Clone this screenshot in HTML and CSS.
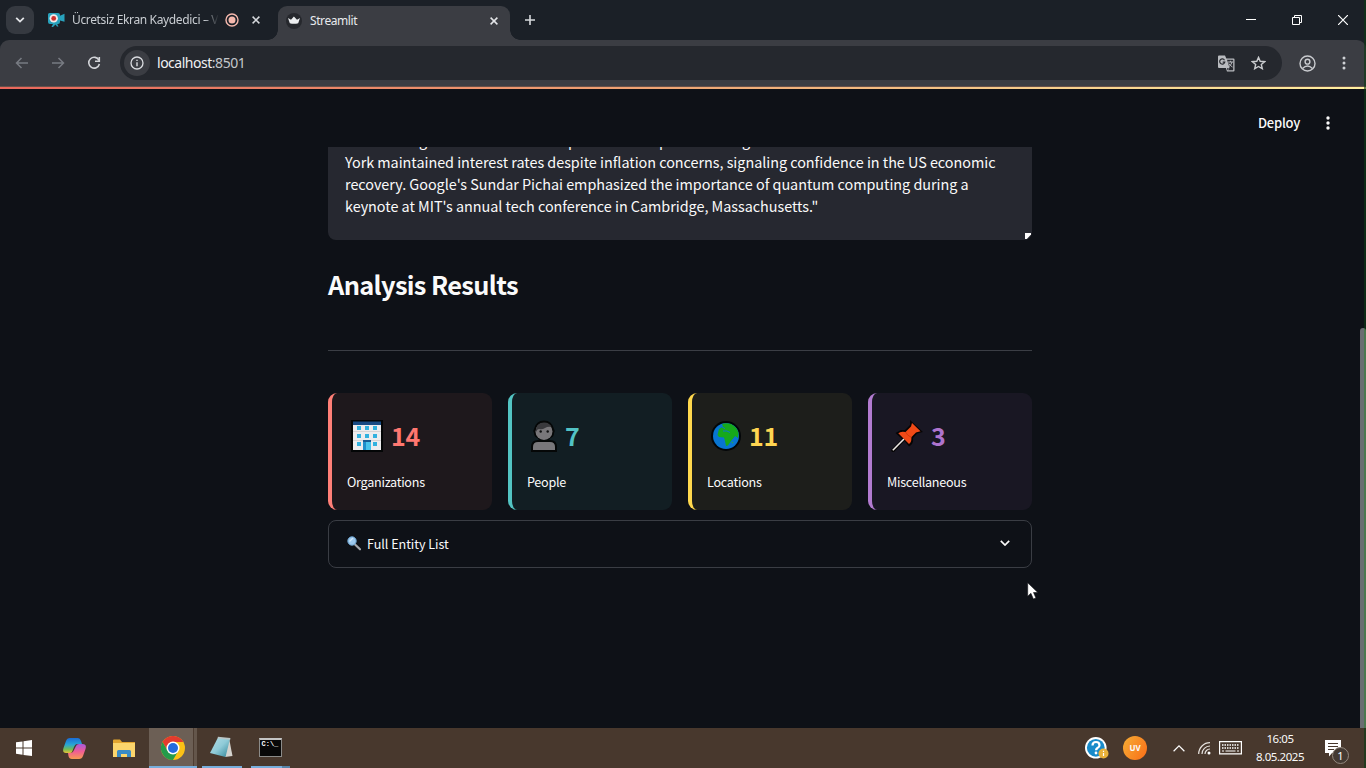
FILE: index.html
```html
<!DOCTYPE html>
<html lang="en">
<head>
<meta charset="utf-8">
<title>Streamlit</title>
<link rel="stylesheet" href="styles.css">
</head>
<body>
<div class="screen">
  <header class="tabstrip">
    <div class="tab-search"><svg width="10" height="6" viewBox="0 0 10 6"><path d="M1.2 .8 5 4.6 8.8 .8" fill="none" stroke="#e3e5e8" stroke-width="1.8"/></svg></div>
    <div class="tab tab-idle">
      <svg class="favicon" width="17" height="15" viewBox="0 0 17 15"><path d="M0 1.5Q0 0 1.5 0H10q2 0 2 2v.8L16.5.8v8L12 7.5V9q0 2-2 2H9.200l1.300 2.600H9L7.500 11.500l-2.500 2.500H3.500L5 11H2Q0 11 0 9Z" fill="#28a2bd"/><circle cx="5.700" cy="5.400" r="4.200" fill="#f4e9e9"/><circle cx="5.700" cy="5.400" r="2.400" fill="#ca302c"/></svg>
      <span class="tab-title title-fade">Ücretsiz Ekran Kaydedici – V</span>
      <svg class="rec" width="14" height="14" viewBox="0 0 14 14"><circle cx="7" cy="7" r="6" fill="none" stroke="#f4b8ad" stroke-width="1.400"/><circle cx="7" cy="7" r="3.500" fill="#f4b8ad"/></svg>
      <svg class="x-idle" width="8" height="8" viewBox="0 0 8 8"><path d="M.6.6 7.400 7.400M7.400.6.6 7.400" stroke="#d6d9dd" stroke-width="1.500"/></svg>
    </div>
    <div class="tab tab-active">
      <svg class="crown" width="16" height="16" viewBox="0 0 16 16"><circle cx="8" cy="8" r="8" fill="#26282d"/><path d="M2 5 5 6.700 7.900 3.500 11 6.700 14 5 12.200 10.200Q8 11.400 3.800 10.200Z" fill="#eceef0"/></svg>
      <span class="tab-title">Streamlit</span>
      <svg class="x-active" width="8" height="8" viewBox="0 0 8 8"><path d="M.6.6 7.400 7.400M7.400.6.6 7.400" stroke="#e3e5e8" stroke-width="1.500"/></svg>
    </div>
    <svg class="plus" width="10" height="10" viewBox="0 0 10 10"><path d="M5 0V10M0 5H10" stroke="#d6d9dd" stroke-width="1.600"/></svg>
    <div class="window-buttons">
      <svg width="10" height="10" viewBox="0 0 10 10"><path d="M0 4.500H10" stroke="#fff"/></svg>
      <svg width="10" height="10" viewBox="0 0 10 10"><path d="M.5 2.500H7.500V9.500H.5ZM2.500 2.500V.5H9.500V7.500H7.500" fill="none" stroke="#fff"/></svg>
      <svg width="10" height="10" viewBox="0 0 10 10"><path d="M0 0 10 10M10 0 0 10" stroke="#fff" stroke-width="1.200"/></svg>
    </div>
  </header>

  <nav class="toolbar">
    <svg class="back" width="14" height="12" viewBox="0 0 14 12"><path d="M13 6H1.800M6.500 1 1.500 6l5 5" fill="none" stroke="#777b82" stroke-width="1.500"/></svg>
    <svg class="forward" width="14" height="12" viewBox="0 0 14 12"><path d="M1 6H12.200M7.500 1l5 5-5 5" fill="none" stroke="#777b82" stroke-width="1.500"/></svg>
    <svg class="reload" width="14" height="14" viewBox="0 0 14 14"><path d="M12 4.300A5.400 5.400 0 1 0 12.400 8" fill="none" stroke="#d3d5d9" stroke-width="1.600"/><path d="M12.300 1V5.300H8" fill="none" stroke="#d3d5d9" stroke-width="1.600"/></svg>
    <div class="omnibox">
      <div class="site-info"><svg width="14" height="14" viewBox="0 0 14 14"><circle cx="7" cy="7" r="6" fill="none" stroke="#dadce0" stroke-width="1.300"/><path d="M7 6.200V10.200M7 3.700V5.100" stroke="#dadce0" stroke-width="1.400"/></svg></div>
      <span class="url">localhost<span class="port">:8501</span></span>
      <svg class="translate" width="17" height="17" viewBox="0 0 17 17"><path d="M1 .5H7l1.300 3H15.500Q16.500 3.500 16.500 4.500V15.500Q16.500 16.500 15.500 16.500H9L7.900 13H1Q0 13 0 12V1.500Q0 .5 1 .5Z" fill="#b9bbbf"/><path d="M9 4.800H15.200V15.200H10L11.500 12.800Z" fill="#292b31"/><path d="M9.800 7H15M12.400 5.800V7M14 7Q13.400 10 10.500 12M10.800 8.500Q12 10.500 14.500 12" fill="none" stroke="#b9bbbf"/><path d="M6.500 5.200A2.600 2.600 0 1 0 6.800 7.200H4.700" fill="none" stroke="#292b31" stroke-width="1.200"/><path d="M9 13.300 10.900 13.100 9.300 15.500Z" fill="#292b31"/></svg>
      <svg class="star" width="15" height="14" viewBox="0 0 15 14"><path d="M7.500 1.400 9.200 5.300 13.600 5.700 10.300 8.500 11.300 12.700 7.500 10.500 3.700 12.700 4.700 8.500 1.400 5.700 5.800 5.300Z" fill="none" stroke="#cacccf" stroke-width="1.400"/></svg>
    </div>
    <svg class="profile" width="17" height="17" viewBox="0 0 17 17"><circle cx="8.500" cy="8.500" r="7.500" fill="none" stroke="#c9cbcf" stroke-width="1.400"/><circle cx="8.500" cy="6.700" r="2.400" fill="none" stroke="#c9cbcf" stroke-width="1.400"/><path d="M3.500 13.500Q8.500 8.700 13.500 13.500" fill="none" stroke="#c9cbcf" stroke-width="1.400"/></svg>
    <svg class="menu-dots" width="4" height="14" viewBox="0 0 4 14"><circle cx="2" cy="2" r="1.500" fill="#cfd1d5"/><circle cx="2" cy="7" r="1.500" fill="#cfd1d5"/><circle cx="2" cy="12" r="1.500" fill="#cfd1d5"/></svg>
  </nav>
  <div class="decoration"></div>

  <main class="page">
    <div class="app-header">
      <span class="deploy">Deploy</span>
      <svg width="4" height="14" viewBox="0 0 4 14"><circle cx="2" cy="2" r="1.700" fill="#fafafa"/><circle cx="2" cy="7" r="1.700" fill="#fafafa"/><circle cx="2" cy="12" r="1.700" fill="#fafafa"/></svg>
    </div>
    <div class="content">
      <div class="textarea">
        <div class="line cut-line"><i>g</i><i>p</i><i>p</i><i>g</i></div>
        <div class="line">York maintained interest rates despite inflation concerns, signaling confidence in the US economic</div>
        <div class="line">recovery. Google's Sundar Pichai emphasized the importance of quantum computing during a</div>
        <div class="line">keynote at MIT's annual tech conference in Cambridge, Massachusetts."</div>
        <svg class="grip" width="6" height="6" viewBox="0 0 6 6"><path d="M0 0H6V1.500L1.800 6H0Z" fill="#fff"/></svg>
      </div>
      <h2 class="heading">Analysis Results</h2>
      <div class="rule"></div>
      <div class="cards">
        <section class="card orgs">
          <div class="metric">
            <svg width="32" height="32" viewBox="0 0 32 32"><path d="M0 0H32V32H0Z" fill="#030506"/><path d="M2 5H30V30H2Z" fill="#ececee"/><path d="M2 1.500H30V5H2Z" fill="#174a83"/><path d="M2 11H30V12H2ZM2 20H30V21H2Z" fill="#d6d3d5"/><path d="M6 6h4v4H6ZM14 6h4v4H14ZM22 6h4v4H22ZM6 14h4v4H6ZM14 14h4v4H14ZM22 14h4v4H22ZM6 22h4v4H6ZM22 22h4v4H22Z" fill="#31b1df"/><path d="M12 20H20V30H12Z" fill="#48c3eb"/><path d="M12 20H20V22H12Z" fill="#175c94"/><path d="M12 22h3v8h-3Z" fill="#1e8ecb"/></svg>
            <b>14</b>
          </div>
          <div class="label">Organizations</div>
        </section>
        <section class="card people">
          <div class="metric">
            <svg width="26" height="32" viewBox="0 0 26 32"><path d="M0 32V27Q0 20 7 20H8L6.500 18Q3 17 3 13 1.500 11 3 9 5 .5 13 .5T23 9Q24.500 11 23 13 23 17 19.500 18L18 20H19Q26 20 26 27V32Z" fill="#050707"/><path d="M2 30V27Q2 22 7 22H19Q24 22 24 27V30Z" fill="#79777a"/><circle cx="13" cy="11.500" r="8.500" fill="#79777a"/><path d="M5 9Q6 2.500 13 2.500 18.500 2.500 20.500 7 17 6 14 8 11 10 8 9Q6 9 5 12Z" fill="#39393c"/><circle cx="9.700" cy="11.500" r="1.200" fill="#111"/><circle cx="16.700" cy="11.500" r="1.200" fill="#111"/></svg>
            <b>7</b>
          </div>
          <div class="label">People</div>
        </section>
        <section class="card places">
          <div class="metric">
            <svg width="30" height="30" viewBox="0 0 30 30"><circle cx="15" cy="15" r="15" fill="#030608"/><circle cx="15" cy="15" r="13" fill="#0875d1"/><path d="M7 12 8 8 12 5.500 11 3Q15 1.500 20 3 26 6 27.500 12L27 17 24 15 22.500 17 20 20 17 24.500 15 25 14 20 13 16.500 8 16 6.500 14Z" fill="#16a91b"/><path d="m12 10 4 0 3 1.500M11 6l3 1.500" stroke="#0875d1" fill="none"/><circle cx="21.500" cy="21.500" r=".8" fill="#2caa49"/></svg>
            <b>11</b>
          </div>
          <div class="label">Locations</div>
        </section>
        <section class="card misc">
          <div class="metric">
            <svg width="32" height="32" viewBox="0 0 32 32"><path d="M0 30 11 19 4.500 13 10 10H14L19 5V0L32 12 26 13.500 22 18Q23 24 18 26.500L13.500 21 3 32H1Z" fill="#060505"/><path d="M1.800 30.200 13 19" stroke="#ece7e5" stroke-width="1.600"/><path d="M21 3 29.500 11.200 25 12.500 20.300 17.300Q21 22 18 24L7.300 13.300Q9.500 11 14.500 12L20 6.500Z" fill="#f14a17"/><path d="M14.500 12Q16 15.500 20.300 17.300" stroke="#d43a0d" fill="none"/></svg>
            <b>3</b>
          </div>
          <div class="label">Miscellaneous</div>
        </section>
      </div>
      <div class="expander">
        <svg width="14" height="15" viewBox="0 0 14 15"><path d="M7.500 8 13 13.300" stroke="#a3a7ad" stroke-width="2.200" stroke-linecap="round"/><circle cx="5" cy="5" r="4.200" fill="#9cc9ee" stroke="#6aa0cc" stroke-width="1"/><path d="M2.500 5.500 6 2" stroke="#d0e7fa" stroke-width="1.300"/></svg>
        <span>Full Entity List</span>
        <svg class="chevron" width="10" height="6" viewBox="0 0 10 6"><path d="M.8.8 5 5 9.200.8" fill="none" stroke="#fafafa" stroke-width="1.700"/></svg>
      </div>
    </div>
  </main>

  <footer class="taskbar">
    <div class="task start"><svg width="16" height="16" viewBox="0 0 16 16"><path d="M0 2.300 6.500 1.400V7.600H0ZM7.500 1.200 16 0V7.600H7.500ZM0 8.500H6.500V14.700L0 13.800ZM7.500 8.500H16V16L7.500 14.900Z" fill="#fff"/></svg></div>
    <div class="task copilot"><svg width="23" height="21" viewBox="0 0 23 21"><defs><linearGradient id="cb" x2="0" y2="1"><stop offset="0" stop-color="#1a6cd8"/><stop offset=".45" stop-color="#28a6d5"/><stop offset=".75" stop-color="#72bc55"/><stop offset="1" stop-color="#e8c238"/></linearGradient><linearGradient id="cp" x2="0" y2="1"><stop offset="0" stop-color="#a65add"/><stop offset=".5" stop-color="#ef5d94"/><stop offset="1" stop-color="#f79a51"/></linearGradient></defs><path d="M7 0H15Q17 0 18 3L19 6H14Q12 6 11 9L9 14Q8.500 15 7 15H3Q-1 15 .5 10L3 3Q4 0 7 0Z" fill="url(#cb)"/><path d="M16 6H19.500Q24 6 22.500 11L20 18Q19 21 16 21H9Q6 21 5.500 18L5 15H8Q10 15 11 12L13 8Q14 6 16 6Z" fill="url(#cp)"/></svg></div>
    <div class="task folder"><svg width="22" height="19" viewBox="0 0 22 19"><path d="M0 1.500Q0 .5 1 .5H7L9 3H22V18H0Z" fill="#e2a52f"/><path d="M0 4H22V18H0Z" fill="#fbd56c"/><path d="M4 18V12.500Q4 11 5.500 11H16.500Q18 11 18 12.500V18H14V15H8V18Z" fill="#398bc5"/></svg></div>
    <div class="task chrome"><svg width="24" height="24" viewBox="0 0 24 24"><circle cx="12" cy="12" r="12" fill="#fbc116"/><path d="M1.600 6A12 12 0 0 1 22.400 6H12L6.800 15Z" fill="#e33b2e"/><path d="M1.600 6 6.800 15 12 18 17.200 15 12 24A12 12 0 0 1 1.600 6Z" fill="#249b4b"/><circle cx="12" cy="12" r="6.500" fill="#fff"/><circle cx="12" cy="12" r="5" fill="#246bdd"/></svg></div>
    <div class="task notepad"><svg width="23" height="22" viewBox="0 0 23 22"><defs><linearGradient id="note" x2="1" y2="1"><stop offset="0" stop-color="#b5dde5"/><stop offset=".5" stop-color="#8fcbd8"/><stop offset="1" stop-color="#2f8497"/></linearGradient></defs><path d="M19 2 22.500 20 15 21Z" fill="#d4d3ce"/><path d="M8 1.500 20 3 15.500 21 0 17Z" fill="url(#note)"/><path d="M7.800 1.600 20.300 2.800" stroke="#b9c6c7" stroke-width="1.800"/></svg></div>
    <div class="task terminal"><div class="cmd">C:\_</div></div>
    <div class="terminal-stack"></div>
    <div class="tray">
      <svg class="help" width="24" height="22" viewBox="0 0 24 22"><circle cx="10.800" cy="10.800" r="10.800" fill="#fff"/><circle cx="10.800" cy="10.800" r="8.900" fill="#188bca"/><path d="M7.500 8.500Q7.500 5 11 5T14.500 8.200Q14.500 10 12.500 11 11 12 11 13.300" fill="none" stroke="#fff" stroke-width="2.200"/><circle cx="11" cy="16" r="1.400" fill="#fff"/><circle cx="18.500" cy="16.500" r="5" fill="#e9b23a"/><path d="M18.500 16V19M18.500 13.700V14.900" stroke="#fff" stroke-width="1.200"/></svg>
      <div class="uv">UV</div>
      <svg class="up" width="12" height="7" viewBox="0 0 12 7"><path d="M.6 6.200 6 .9 11.400 6.200" fill="none" stroke="#fff" stroke-width="1.200"/></svg>
      <svg class="wifi" width="13" height="13" viewBox="0 0 13 13"><path d="M.7 12A11.300 11.300 0 0 1 12 .7M4 12A8 8 0 0 1 12 4M7 12A5 5 0 0 1 12 7" fill="none" stroke="#e7e3df" stroke-width="1.200"/><circle cx="11" cy="11" r="1.500" fill="#fff"/></svg>
      <svg class="keys" width="23" height="14" viewBox="0 0 23 14"><path d="M.6.6H22.400V12.900H.6Z" fill="none" stroke="#fff" stroke-width="1.200"/><path d="M3 4H20M3 7H20" stroke="#fff" stroke-width="1.300" stroke-dasharray="1.500 1"/><path d="M3 10H5M6.500 10H16.500M18 10H20" stroke="#fff" stroke-width="1.200"/></svg>
      <div class="clock"><span>16:05</span><span>8.05.2025</span></div>
      <div class="notice"><svg width="16" height="17" viewBox="0 0 16 17"><path d="M0 0H16V13H7L4 16.500V13H0Z" fill="#fff"/><path d="M3 3.500H13M3 6.500H13M3 9.500H9" stroke="#48382d" stroke-width="1.100"/></svg><span class="count">1</span></div>
    </div>
  </footer>
  <div class="edge"></div>
  <div class="scrollbar"></div>
  <svg class="cursor" width="12" height="18" viewBox="0 0 12 18"><path d="M.7.8V14.200L3.900 11.300 6.400 17 8.900 15.900 6.500 10.500H10.800Z" fill="#fff" stroke="#14161a" stroke-width=".6"/></svg>
</div>
</body>
</html>
```
FILE: styles.css
```css
* { box-sizing: border-box; }
body { margin: 0; background: #0e1117; }
svg { display: block; flex: none; }
.screen { position: relative; width: 1366px; height: 768px; overflow: hidden; display: flex; flex-direction: column; background: linear-gradient(#1b2027 60px, #0e1117 60px); font-family: "Noto Sans CJK SC", sans-serif; color: #fafafa; white-space: nowrap; }

.tabstrip { flex: none; height: 40px; background: #1b2027; display: flex; align-items: center; padding-left: 6px; }
.tab-search { width: 28px; height: 28px; border-radius: 9px; background: #353940; display: flex; align-items: center; justify-content: center; }
.tab { display: flex; align-items: center; font: 12px/16px "Noto Sans", sans-serif; }
.tab-idle { width: 244px; padding-left: 14px; color: #c9cdd2; }
.tab-title { letter-spacing: -.42px; }
.title-fade { width: 146px; margin-left: 7px; overflow: hidden; letter-spacing: -.36px; -webkit-mask-image: linear-gradient(90deg, #000 132px, transparent 147px); }
.rec { margin-left: 7px; }
.x-idle { margin-left: 13px; }
.tab-active { position: relative; width: 232px; height: 34px; align-self: flex-end; padding: 0 12px 4px 8px; border-radius: 9px 9px 0 0; background: #3b3d43; color: #e8eaed; }
.tab-active::before, .tab-active::after { content: ""; position: absolute; bottom: 0; width: 10px; height: 10px; }
.tab-active::before { right: 100%; background: radial-gradient(circle at 0 0, transparent 9.5px, #3b3d43 10px); }
.tab-active::after { left: 100%; background: radial-gradient(circle at 100% 0, transparent 9.5px, #3b3d43 10px); }
.crown { margin-right: 8px; }
.x-active { margin-left: auto; }
.plus { margin-left: 15px; }
.window-buttons { margin-left: auto; display: flex; gap: 36px; padding-right: 18px; }

.toolbar { flex: none; height: 46px; background: #3b3d43; display: flex; align-items: center; padding-left: 15px; border-radius: 9px 9px 0 0; }
.forward { margin-left: 22px; }
.reload { margin-left: 22px; }
.omnibox { margin-left: 19px; width: 1162px; height: 34px; border-radius: 17px; background: #25282e; display: flex; align-items: center; padding: 0 16px 0 4px; }
.site-info { width: 26px; height: 26px; border-radius: 50%; background: #3b3d43; display: flex; align-items: center; justify-content: center; }
.url { margin-left: 7px; font: 14px/20px "Noto Sans", sans-serif; letter-spacing: -.48px; color: #f0f1f3; }
.port { color: #c4c7cb; }
.translate { margin-left: auto; }
.star { margin-left: 16px; }
.profile { margin-left: 17px; }
.menu-dots { margin-left: 26px; }
.decoration { flex: none; height: 3px; background: linear-gradient(90deg, #e9675c, #efa775 50%, #fff0a0); border-top: 1px solid #65504a; }

.page { flex: none; height: 639px; background: #0e1117; }
.app-header { height: 58px; display: flex; align-items: center; justify-content: flex-end; gap: 26px; padding: 10px 36px 0 0; font-size: 13px; }
.deploy { letter-spacing: -.25px; font-weight: 500; padding-bottom: 2px; }
.content { width: 704px; margin-left: 328px; }
.textarea { position: relative; height: 93px; background: #262830; border-radius: 0 0 8px 8px; overflow: hidden; padding-left: 17px; }
.line { height: 22px; font-size: 14.4px; line-height: 22px; letter-spacing: -.03px; }
.cut-line { margin-top: -18px; display: flex; padding-left: 74px; }
.cut-line i { font-style: normal; width: 149px; }
.cut-line i:nth-child(2) { width: 91px; }
.cut-line i:nth-child(3) { width: 83px; }
.grip { position: absolute; right: 1px; bottom: 1px; }
.heading { margin: 25px 0 0; font-size: 25.4px; font-weight: 700; line-height: 38px; letter-spacing: -.65px; }
.rule { margin-top: 47px; height: 1px; background: #3b3e45; }
.cards { margin-top: 42px; display: grid; grid-template-columns: repeat(4, 164px); gap: 16px; }
.card { height: 117px; border-radius: 9px; border-left: 4px solid; padding: 25px 0 0 15px; }
.metric { height: 35px; display: flex; align-items: center; gap: 9px; padding-left: 4px; }
.metric b { font-size: 25px; line-height: 35px; font-weight: 700; margin-left: -1px; letter-spacing: -.3px; }
.orgs { border-color: #ff7f77; background: #1e181c; }
.orgs b { color: #ff7770; }
.people { border-color: #53c4c3; background: #121e23; }
.people b { color: #52c3c5; }
.places { border-color: #ffd84d; background: #1d1e1b; }
.places b { color: #ffd551; }
.misc { border-color: #b27bd0; background: #191723; }
.misc b { color: #ae74ce; }
.label { margin-top: 19px; font-size: 12.6px; line-height: 20px; letter-spacing: -.26px; color: #fafafa; }
.expander { margin-top: 10px; height: 48px; border: 1px solid #3a3d44; border-radius: 8px; display: flex; align-items: center; gap: 6px; padding: 0 21px 2px 18px; font-size: 12.6px; letter-spacing: -.04px; }
.chevron { margin-left: auto; }

.taskbar { flex: none; height: 40px; background: #48382d; display: flex; align-items: stretch; }
.task { width: 49px; display: flex; align-items: center; justify-content: center; }
.start { width: 48px; }
.copilot { width: 53px; }
.folder { width: 45px; margin-right: 3px; }
.chrome { width: 48px; background: linear-gradient(90deg, #6c5f55 44px, #4d3d32 44px, #4d3d32 45px, #64564b 45px); border-bottom: 2px solid #76aedc; }
.chrome svg { margin-top: 2px; }
.notepad { width: 40px; margin-left: 5px; padding-right: 2px; border-bottom: 2px solid #76aedc; }
.terminal { width: 31px; margin-left: 9px; padding-left: 7px; border-bottom: 2px solid #76aedc; }
.terminal-stack { width: 8px; border-bottom: 2px solid #5684a8; }
.cmd { width: 23px; height: 19px; background: #080808; border: 1px solid #8b8b89; border-top: 2px solid #c4c4c4; color: #fff; font: bold 7px/9px "Liberation Mono", monospace; padding-left: 2px; }
.tray { margin-left: auto; display: flex; align-items: center; padding-right: 17px; }
.uv { width: 24px; height: 24px; margin-left: 14px; border-radius: 50%; background: linear-gradient(120deg, #f6ad35, #fa6d17); font: bold 8px/24px "Noto Sans", sans-serif; text-align: center; }
.up { margin-left: 26px; }
.wifi { margin-left: 13px; }
.keys { margin-left: 8px; }
.clock { width: 60px; margin-left: 8px; display: flex; flex-direction: column; align-items: center; font: 11.5px/18px "Noto Sans", sans-serif; letter-spacing: -.45px; padding-bottom: 1px; }
.notice { position: relative; margin-left: 15px; width: 24px; height: 17px; }
.count { position: absolute; left: 7px; top: 7px; width: 17px; height: 17px; border: 1px solid #94897f; border-radius: 50%; background: #443a33; font: 11px/15px "Noto Sans", sans-serif; text-align: center; }

.edge { position: absolute; right: 0; top: 0; width: 2px; height: 768px; background: rgba(12, 58, 20, .6); }
.scrollbar { position: absolute; right: 0; top: 328px; width: 6px; height: 400px; border-radius: 3px 3px 0 0; background: linear-gradient(90deg, #6b6d72 4px, #4c7850 4px); }
.cursor { position: absolute; left: 1027px; top: 582px; }
```
